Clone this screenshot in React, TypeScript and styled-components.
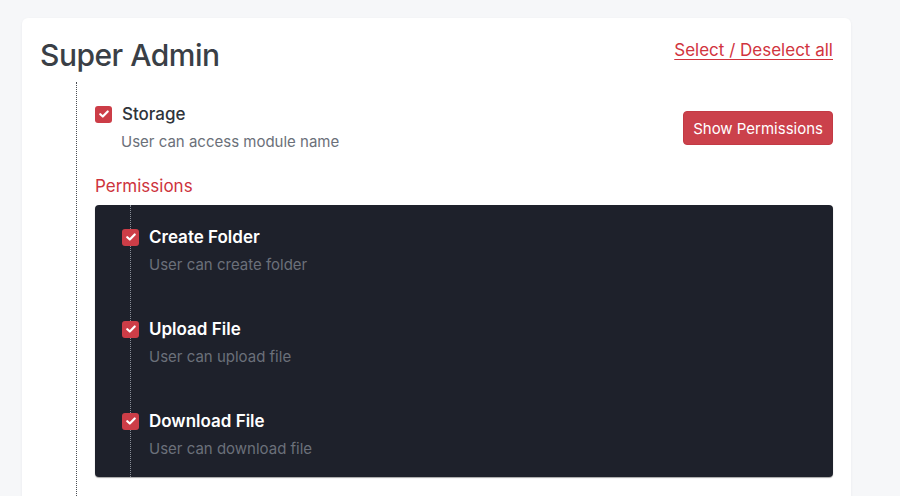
import * as React from 'react';
import styled, { createGlobalStyle } from 'styled-components';

const GlobalStyle = createGlobalStyle`
    body {
        margin: 0;
        background: #f6f7f9;
        font-family: Inter, "Noto Sans", sans-serif;
        -webkit-font-smoothing: antialiased;
    }
`;

const Page = styled.div`
    padding: 18px 0 0 22px;
    height: 478px;
    overflow: hidden;
`;

const Card = styled.div`
    width: 793px;
    min-height: 520px;
    background: #fff;
    border-radius: 6px;
    box-shadow: 0 1px 3px rgba(20, 30, 50, 0.06);
    padding: 19px 18px 0 18px;
`;

const Header = styled.div`
    display: flex;
    justify-content: space-between;
    align-items: flex-start;
`;

const Title = styled.h1`
    margin: 0;
    font-size: 30px;
    line-height: 36px;
    font-weight: 500;
    color: #3a3f46;
    letter-spacing: -0.5px;
`;

const SelectAll = styled.a`
    margin-top: 1px;
    font-size: 17px;
    line-height: 24px;
    color: #d1343e;
    text-decoration: underline;
    text-underline-offset: 3px;
    cursor: pointer;
`;

const Module = styled.div`
    margin: 9px 0 0 36px;
    border-left: 1px dotted #4b4f55;
    padding: 20px 0 0 18px;
    min-height: 420px;
`;

const ModuleRow = styled.div`
    display: flex;
    justify-content: space-between;
    align-items: center;
`;

const Item = styled.div`
    display: flex;
    flex-direction: column;
`;

const ItemHead = styled.label`
    display: flex;
    align-items: center;
    gap: 10px;
`;

const Box = styled.span<{ $overlap?: boolean }>`
    width: 17px;
    height: 17px;
    flex: none;
    border-radius: 3px;
    background: #cc3d47;
    display: inline-flex;
    align-items: center;
    justify-content: center;
    margin-left: ${p => (p.$overlap ? '-9px' : '0')};
    position: relative;
`;

const ItemName = styled.span<{ $dark?: boolean }>`
    font-size: 17px;
    line-height: 24px;
    font-weight: ${p => (p.$dark ? 600 : 500)};
    color: ${p => (p.$dark ? '#ffffff' : '#2f343a')};
`;

const ItemDesc = styled.span<{ $dark?: boolean }>`
    margin-top: 4px;
    padding-left: ${p => (p.$dark ? '18px' : '26px')};
    font-size: 15px;
    line-height: 24px;
    color: ${p => (p.$dark ? '#6b707a' : '#6b7079')};
`;

const ShowButton = styled.button`
    height: 34px;
    padding: 0 9px;
    border: 1px solid #c33a44;
    border-radius: 4px;
    background: #cb414b;
    color: #fff;
    font-family: inherit;
    font-size: 15px;
    cursor: pointer;
`;

const SectionLabel = styled.div`
    margin-top: 20px;
    font-size: 17px;
    line-height: 24px;
    color: #cd333d;
`;

const Panel = styled.div`
    margin-top: 7px;
    background: #1e212b;
    border-radius: 4px;
    box-shadow: 0 1px 1px rgba(0, 0, 0, 0.35);
`;

const PermissionList = styled.div`
    margin-left: 35px;
    border-left: 1px dotted #8a8f98;
    padding: 20px 0 16px 0;
    display: flex;
    flex-direction: column;
    gap: 40px;
`;

const Check = () => (
    <svg width="10" height="8" viewBox="0 0 10 8" fill="none">
        <path d="M1.3 4.2 L3.8 6.5 L8.7 1.5" stroke="#fff" strokeWidth="2.2" strokeLinecap="round" strokeLinejoin="round" />
    </svg>
);

const permissions = [
    { name: 'Create Folder', description: 'User can create folder' },
    { name: 'Upload File', description: 'User can upload file' },
    { name: 'Download File', description: 'User can download file' }
];

export default function App(): JSX.Element {
    return (
        <Page>
            <GlobalStyle />
            <Card>
                <Header>
                    <Title>Super Admin</Title>
                    <SelectAll>Select / Deselect all</SelectAll>
                </Header>
                <Module>
                    <ModuleRow>
                        <Item>
                            <ItemHead>
                                <Box><Check /></Box>
                                <ItemName>Storage</ItemName>
                            </ItemHead>
                            <ItemDesc>User can access module name</ItemDesc>
                        </Item>
                        <ShowButton>Show Permissions</ShowButton>
                    </ModuleRow>
                    <SectionLabel>Permissions</SectionLabel>
                    <Panel>
                        <PermissionList>
                            {permissions.map(p =>
                                <Item key={p.name}>
                                    <ItemHead>
                                        <Box $overlap><Check /></Box>
                                        <ItemName $dark>{p.name}</ItemName>
                                    </ItemHead>
                                    <ItemDesc $dark>{p.description}</ItemDesc>
                                </Item>
                            )}
                        </PermissionList>
                    </Panel>
                </Module>
            </Card>
        </Page>
    );
}
